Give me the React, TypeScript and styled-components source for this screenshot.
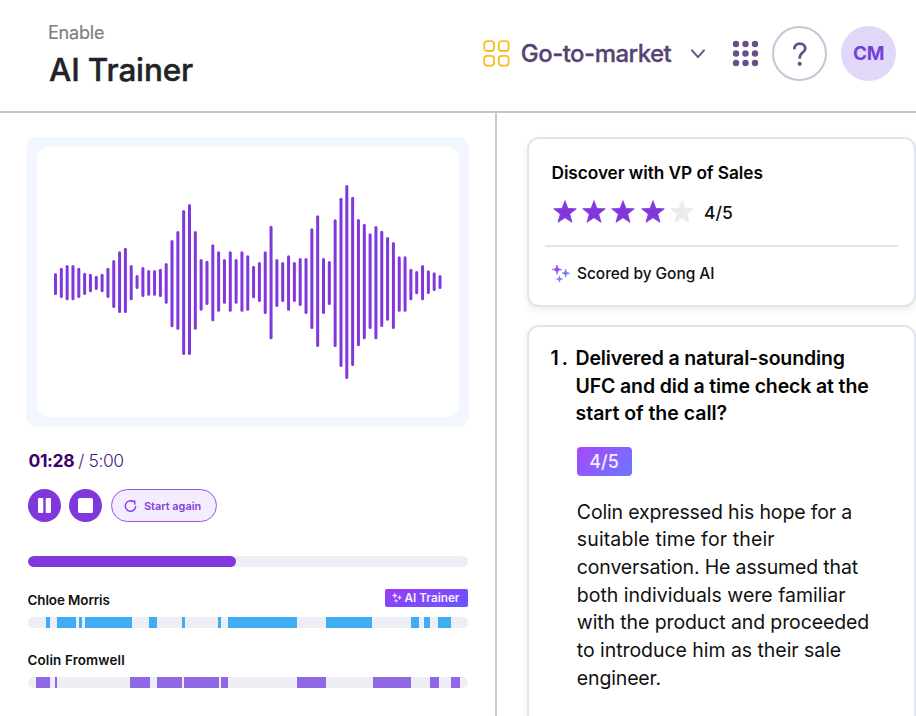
import React from 'react';
import styled, { createGlobalStyle } from 'styled-components';

const GlobalStyle = createGlobalStyle`
  *, *::before, *::after { box-sizing: border-box; }
  body { margin: 0; background: #fff; overflow: hidden; }
  button { font: inherit; padding: 0; border: 0; background: none; }
  h1, h2, h3, p { margin: 0; font: inherit; }
  svg { display: block; flex: none; }
`;

const Page = styled.div`
  display: flex;
  flex-direction: column;
  width: 916px;
  height: 716px;
  overflow: hidden;
  font-family: Inter, 'Liberation Sans', sans-serif;
  color: #111;
`;

/* Text set on one line, with its own tracking */
const Line = styled.span<{ $track?: number }>`
  display: block;
  white-space: nowrap;
  letter-spacing: ${({ $track = 0 }) => $track}px;
`;

/* ---------- header ---------- */

const Header = styled.header`
  display: flex;
  justify-content: space-between;
  flex: none;
  height: 113px;
  padding: 21px 20px 0 48px;
  border-bottom: 2px solid #c9c0d6;
`;

const Section = styled.p`
  font-size: 18px;
  line-height: 24px;
  color: #808084;
  -webkit-text-stroke: 0.2px #808084;
`;

const Title = styled.h1`
  margin: 6px 0 0 1px;
  font-size: 31.5px;
  font-weight: 500;
  line-height: 38px;
  color: #222327;
  -webkit-text-stroke: 0.4px #222327;
`;

const HeaderTools = styled.div`
  display: flex;
  align-items: center;
  height: 55px;
  margin-top: 5px;
`;

const Workspace = styled.button`
  display: flex;
  align-items: center;
  width: 223px;
  font-size: 24px;
  font-weight: 500;
  line-height: 32px;
  color: #584275;
`;

const WorkspaceName = styled(Line)`
  width: 152px;
  margin: 0 18px 0 10px;
  -webkit-text-stroke: 0.3px #584275;
`;

const AppsButton = styled.button`
  margin: 0 13px 0 26px;
`;

const HelpButton = styled.button`
  display: grid;
  place-items: center;
  width: 55px;
  height: 55px;
  border: 2px solid #cdc3d9;
  border-radius: 50%;
`;

const Avatar = styled.div`
  display: grid;
  place-items: center;
  width: 55px;
  height: 55px;
  margin-left: 14px;
  border-radius: 50%;
  background: #e0d7f9;
  color: #743fdc;
  font-size: 19px;
  font-weight: 700;
`;

/* ---------- player ---------- */

const Body = styled.main`
  display: flex;
  flex: 1;
  min-height: 0;
`;

const Player = styled.section`
  display: flex;
  flex-direction: column;
  width: 497px;
  padding: 24px 27px 0 27.5px;
  border-right: 2px solid #cdc6d8;
`;

const WaveFrame = styled.div`
  flex: none;
  width: 443px;
  height: 290px;
  margin-left: -1.5px;
  border-radius: 11px;
  background: #f1f6ff;
  padding: 10px 10px 10px 11px;
`;

const WaveScreen = styled.div`
  height: 270px;
  border-radius: 12px;
  background: #fff;
`;

const Time = styled.div`
  display: flex;
  gap: 4px;
  height: 24px;
  margin: 22px 0 0 1px;
  font-size: 17.5px;
  line-height: 24px;
  color: #4c197e;
  font-weight: 300;
`;

const Elapsed = styled(Line)`
  font-weight: 700;
  color: #3b0270;
`;

const Controls = styled.div`
  display: flex;
  gap: 8.5px;
  height: 33px;
  margin: 16px 0 0 0;
`;

const RoundButton = styled.button`
  display: grid;
  place-items: center;
  width: 33px;
  height: 33px;
  border-radius: 50%;
  background: #8038dc;
`;

const RestartButton = styled.button`
  display: flex;
  align-items: center;
  width: 106px;
  height: 33px;
  padding-left: 12.5px;
  gap: 7px;
  border: 1px solid #9556e5;
  border-radius: 17px;
  background: #f4edff;
  color: #8640df;
  font-size: 10.9px;
  font-weight: 600;
`;

const Track = styled.div`
  display: flex;
  flex: none;
  width: 440.5px;
  height: 11px;
  border-radius: 6px;
  background: #edeff4;
  overflow: hidden;
`;

const Progress = styled(Track)`
  margin-top: 34px;
`;

const ProgressFill = styled.div`
  width: 208.5px;
  border-radius: 6px;
  background: #8038dc;
`;

const SpeakerHead = styled.div<{ $top: number }>`
  display: flex;
  justify-content: space-between;
  align-items: center;
  flex: none;
  width: 440.5px;
  height: 20px;
  margin: ${({ $top }) => $top}px 0 7px;
  font-size: 13.4px;
  font-weight: 600;
  color: #111;
`;

const TrainerTag = styled.span`
  display: flex;
  align-items: center;
  gap: 3px;
  width: 83px;
  height: 18px;
  margin-top: -4px;
  padding-left: 6.5px;
  border-radius: 2px;
  background: linear-gradient(165deg, #983cf8 10%, #6a55ff 90%);
  color: #f6efff;
  font-size: 11.75px;
  font-weight: 600;
`;

const Talk = styled.div<{ $gap: number; $width: number; $color: string }>`
  flex: none;
  width: ${({ $width }) => $width}px;
  margin-left: ${({ $gap }) => $gap}px;
  background: ${({ $color }) => $color};
`;

/* ---------- scorecard ---------- */

const Scorecard = styled.section`
  display: flex;
  flex-direction: column;
  flex: 1;
  padding: 24px 0 0 29.5px;
`;

const Card = styled.article`
  flex: none;
  width: 389.5px;
  border: 2px solid #e2e4ed;
  border-radius: 12px;
  background: #fff;
  box-shadow: 0 3px 7px rgba(40, 40, 60, 0.09);
`;

const SummaryCard = styled(Card)`
  height: 169.5px;
  padding: 22px 0 0 17px;
`;

const CardTitle = styled.h2`
  padding-left: 6px;
  font-size: 17.25px;
  font-weight: 600;
  line-height: 24px;
  color: #050505;
`;

const Rating = styled.div`
  display: flex;
  align-items: center;
  gap: 5.4px;
  height: 24px;
  margin-top: 15px;
  padding-left: 7px;
  font-size: 17.5px;
  font-weight: 500;
  color: #111;
`;

const RatingValue = styled(Line)`
  margin: 1px 0 0 4.5px;
`;

const Divider = styled.hr`
  width: 352.5px;
  height: 2px;
  margin: 21px 0 0 -0.5px;
  border: 0;
  background: #e2e4ed;
`;

const ScoredBy = styled.div`
  display: flex;
  align-items: center;
  gap: 7.5px;
  height: 24px;
  margin-top: 14.5px;
  padding-left: 6px;
  font-size: 15.5px;
  font-weight: 500;
  color: #111;
`;

const QuestionCard = styled(Card)`
  height: 420px;
  margin-top: 18.5px;
  padding: 18px 0 0 22px;
`;

const Question = styled.div`
  display: flex;
  font-size: 19.5px;
  font-weight: 600;
  line-height: 27.6px;
  color: #050505;
`;

const QuestionNumber = styled.span`
  width: 25px;
  letter-spacing: 3px;
`;

const ScoreTag = styled.div`
  display: grid;
  place-items: center;
  width: 55px;
  height: 29px;
  margin: 19px 0 0 26px;
  border-radius: 4px;
  background: linear-gradient(135deg, #a24bfb 5%, #6f75ff 95%);
  color: #f4efff;
  font-size: 18px;
  font-weight: 500;
`;

const Answer = styled.p`
  margin: 23px 0 0 26.3px;
  font-size: 19.5px;
  line-height: 27.65px;
  color: #111;
`;

/* ---------- data ---------- */

/* [top, bottom] of every bar of the recording, in thirds of a pixel */
const BARS: [number, number][] = [
  [429, 495], [413, 504], [405, 511], [405, 511], [413, 504], [428, 495], [431, 487],
  [437, 480], [431, 487], [413, 504], [390, 534], [364, 549], [353, 549], [405, 511],
  [435, 477], [411, 501], [420, 497], [420, 497], [416, 501], [399, 521], [330, 592],
  [303, 599], [240, 675], [222, 675], [303, 599], [387, 542], [392, 525], [343, 574],
  [364, 545], [387, 521], [364, 545], [387, 521], [364, 545], [376, 542], [407, 505],
  [396, 516], [364, 552], [287, 628], [387, 531], [396, 516], [376, 542], [396, 516],
  [384, 528], [384, 552], [295, 597], [256, 651], [384, 552], [393, 525], [268, 651],
  [203, 711], [165, 747], [200, 708], [267, 649], [281, 628], [310, 597], [288, 628],
  [302, 591], [321, 572], [336, 597], [379, 545], [379, 545], [416, 511], [423, 493],
  [405, 511], [421, 492], [427, 483], [435, 477],
];

/* Stretches of talk, as [start, end] along the track */
const CHLOE: [number, number][] = [
  [18.5, 22.5], [29.5, 48], [51.5, 54], [57.5, 104], [121, 129.5], [154, 157], [190.5, 193.5],
  [200.5, 269.2], [298.5, 345], [383.5, 391.5], [396.5, 402.5], [411, 423.5],
];
const COLIN: [number, number][] = [
  [8.5, 22.5], [27, 29.5], [102.5, 122.5], [129, 154.5], [156.5, 191], [193.5, 200.5], [269, 298.5],
  [345, 383.5], [402.5, 411.5], [423.5, 432.5],
];

const HEADING: [string, number][] = [
  ['Delivered a natural-sounding', -0.14],
  ['UFC and did a time check at the', -0.137],
  ['start of the call?', -0.02],
];
const ANSWER: [string, number][] = [
  ['Colin expressed his hope for a', -0.151],
  ['suitable time for their', 0.128],
  ['conversation. He assumed that', -0.149],
  ['both individuals were familiar', 0],
  ['with the product and proceeded', -0.11],
  ['to introduce him as their sale', -0.05],
  ['engineer.', -0.15],
];

/* ---------- drawings ---------- */

const Waveform = () => (
  <svg width="422" height="270" viewBox="37 147 422 270" stroke="#8038dc" strokeWidth="3" strokeLinecap="round">
    {BARS.map(([top, bottom], i) => {
      const x = 55.5 + i * 5.826;
      return <line key={i} x1={x} x2={x} y1={131.5 + top / 3} y2={128.5 + bottom / 3} />;
    })}
  </svg>
);

const TilesIcon = () => (
  <svg width="27" height="27" fill="none" stroke="#fbbc1c" strokeWidth="1.8">
    {[1.2, 15.8].map((y) => [1.2, 15.8].map((x) => (
      <rect key={`${x}-${y}`} x={x} y={y} width="9.8" height="9.8" rx="2.8" />
    )))}
  </svg>
);

const ChevronIcon = () => (
  <svg width="16" height="12" fill="none" stroke="#6b548a" strokeWidth="2" strokeLinecap="round" strokeLinejoin="round">
    <path d="M2 2.3 8 9.2 14 2.3" />
  </svg>
);

const DotsIcon = () => (
  <svg width="27" height="27" fill="#67508a">
    {[4, 13.5, 23].map((y) => [4, 13.5, 23].map((x) => (
      <circle key={`${x}-${y}`} cx={x} cy={y} r="3.2" />
    )))}
  </svg>
);

const QuestionIcon = () => (
  <svg width="16" height="26" fill="none" stroke="#67508a" strokeWidth="2.8">
    <path d="M2.4 8.3V7.6A5.3 5.1 0 0 1 7.7 2.6C11 2.6 13.3 4.6 13.3 7.4 13.3 11.4 7.7 11.7 7.7 16.2V17.8" />
    <circle cx="7.7" cy="22.8" r="2.1" fill="#67508a" stroke="none" />
  </svg>
);

const PauseIcon = () => (
  <svg width="15" height="15" fill="#fff">
    <rect x="1" width="5.3" height="15" rx="1" />
    <rect x="8.7" width="5.3" height="15" rx="1" />
  </svg>
);

const StopIcon = () => (
  <svg width="15" height="15" fill="#fff">
    <rect width="15" height="15" rx="1.5" />
  </svg>
);

const RestartIcon = () => (
  <svg width="13" height="14" fill="none" stroke="#8640df" strokeWidth="1.4">
    <path d="M9.8 3A5.2 5.2 0 1 0 11.7 7" />
    <path d="M6.8 2.2h4v3.6" />
  </svg>
);

const Star = ({ on }: { on: boolean }) => (
  <svg width="24" height="24" viewBox="0 0 24 24" fill={on ? '#8038dc' : '#ebebeb'} stroke={on ? '#8038dc' : '#ebebeb'} strokeWidth="0.8" strokeLinejoin="round">
    <path d="M12 .7l2.9 7.7 8.4.4-6.6 5.3 2.3 8.2L12 17.7 5 22.3l2.3-8.2L.7 8.8l8.4-.4z" />
  </svg>
);

const SPARKS = [
  'M5 0C5.4 3.2 6.2 4.1 9.5 4.6 6.2 5.1 5.4 6 5 9.2 4.6 6 3.8 5.1.5 4.6 3.8 4.1 4.6 3.2 5 0Z',
  'M13.7 4.3C14 7 14.7 7.8 17.4 8.2 14.7 8.6 14 9.4 13.7 12.1 13.4 9.4 12.7 8.6 10 8.2 12.7 7.8 13.4 7 13.7 4.3Z',
  'M7.4 11.2C7.6 13.2 8.2 13.8 10.3 14.1 8.2 14.4 7.6 15 7.4 17 7.2 15 6.6 14.4 4.5 14.1 6.6 13.8 7.2 13.2 7.4 11.2Z',
];

const Sparkles = ({ size, colors }: { size: number; colors: string[] }) => (
  <svg width={size} height={size} viewBox="0 0 18 18">
    {SPARKS.map((d, i) => (
      <path key={i} d={d} fill={colors[i]} stroke={colors[i]} strokeWidth="0.8" strokeLinejoin="round" />
    ))}
  </svg>
);

const TalkTrack = ({ spans, color }: { spans: [number, number][]; color: string }) => (
  <Track>
    {spans.map(([start, end], i) => (
      <Talk key={start} $gap={start - (i ? spans[i - 1][1] : 0)} $width={end - start} $color={color} />
    ))}
  </Track>
);

/* ---------- page ---------- */

export default function App() {
  return (
    <Page>
      <GlobalStyle />
      <Header>
        <div>
          <Section><Line $track={-0.2}>Enable</Line></Section>
          <Title><Line $track={-0.15}>AI Trainer</Line></Title>
        </div>
        <HeaderTools>
          <Workspace>
            <TilesIcon />
            <WorkspaceName $track={-0.53}>Go-to-market</WorkspaceName>
            <ChevronIcon />
          </Workspace>
          <AppsButton><DotsIcon /></AppsButton>
          <HelpButton><QuestionIcon /></HelpButton>
          <Avatar><Line $track={-0.3}>CM</Line></Avatar>
        </HeaderTools>
      </Header>
      <Body>
        <Player>
          <WaveFrame>
            <WaveScreen><Waveform /></WaveScreen>
          </WaveFrame>
          <Time>
            <Elapsed $track={-0.38}>01:28</Elapsed>
            <Line $track={-0.4}>/ 5:00</Line>
          </Time>
          <Controls>
            <RoundButton><PauseIcon /></RoundButton>
            <RoundButton><StopIcon /></RoundButton>
            <RestartButton><RestartIcon /><Line>Start again</Line></RestartButton>
          </Controls>
          <Progress><ProgressFill /></Progress>
          <SpeakerHead $top={23}>
            <Line $track={-0.08}>Chloe Morris</Line>
            <TrainerTag>
              <Sparkles size={10} colors={['#fff', '#fff', '#fff']} />
              <Line>AI Trainer</Line>
            </TrainerTag>
          </SpeakerHead>
          <TalkTrack spans={CHLOE} color="#3eadf3" />
          <SpeakerHead $top={22}>
            <Line $track={0.14}>Colin Fromwell</Line>
          </SpeakerHead>
          <TalkTrack spans={COLIN} color="#9068e6" />
        </Player>
        <Scorecard>
          <SummaryCard>
            <CardTitle><Line $track={-0.06}>Discover with VP of Sales</Line></CardTitle>
            <Rating>
              {[1, 2, 3, 4, 5].map((n) => <Star key={n} on={n <= 4} />)}
              <RatingValue>4/5</RatingValue>
            </Rating>
            <Divider />
            <ScoredBy>
              <Sparkles size={18} colors={['#a046f6', '#717bf8', '#717bf8']} />
              <Line $track={-0.06}>Scored by Gong AI</Line>
            </ScoredBy>
          </SummaryCard>
          <QuestionCard>
            <Question>
              <QuestionNumber>1.</QuestionNumber>
              <h3>{HEADING.map(([text, track]) => <Line key={text} $track={track}>{text}</Line>)}</h3>
            </Question>
            <ScoreTag><Line>4/5</Line></ScoreTag>
            <Answer>{ANSWER.map(([text, track]) => <Line key={text} $track={track}>{text}</Line>)}</Answer>
          </QuestionCard>
        </Scorecard>
      </Body>
    </Page>
  );
}
